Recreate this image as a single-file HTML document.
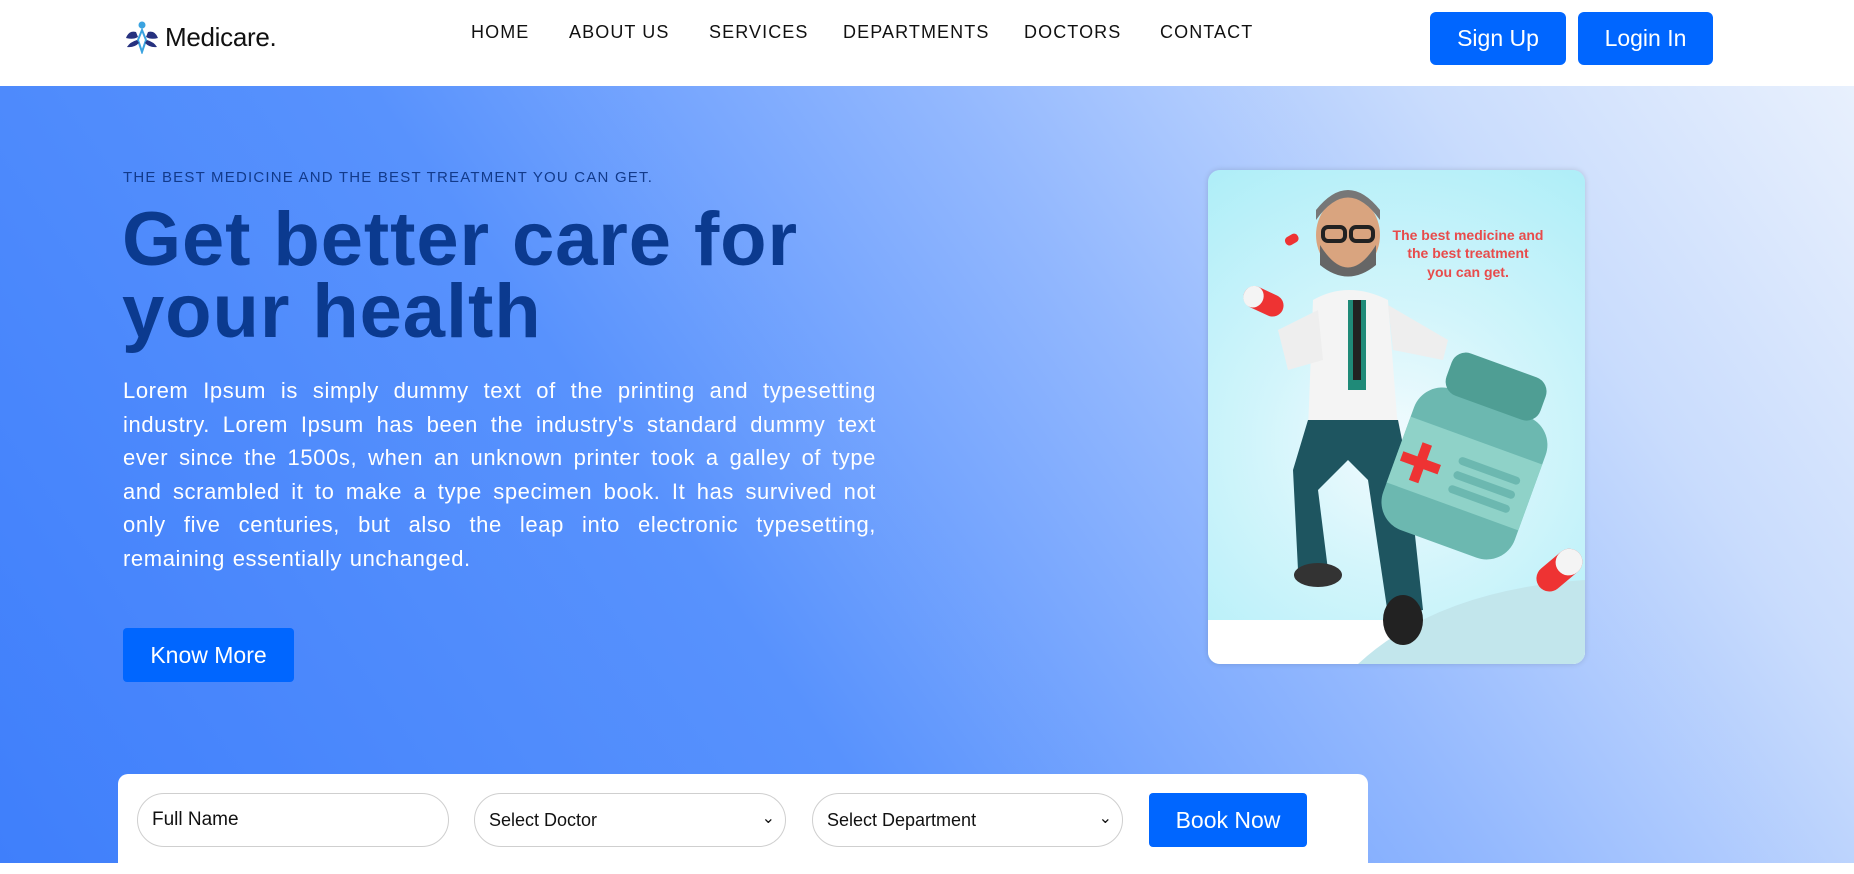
<!DOCTYPE html>
<html><head><meta charset="utf-8"><style>
*{margin:0;padding:0;box-sizing:border-box}
body{width:1854px;height:863px;overflow:hidden;font-family:"Liberation Sans",sans-serif;background:#fff;position:relative}
.nav{position:absolute;left:0;top:0;width:1854px;height:86px;background:#fff}
.logo{position:absolute;left:125px;top:20px;display:flex;align-items:center}
.logo span{font-size:26px;color:#111;margin-left:6px;letter-spacing:-0.3px}
.links a{position:absolute;top:22px;font-size:18px;letter-spacing:1.1px;color:#111;text-decoration:none}
.btn{position:absolute;background:#0066ff;color:#fff;border-radius:6px;display:flex;align-items:center;justify-content:center}
.hero{position:absolute;left:0;top:86px;width:1854px;height:777px;background:linear-gradient(55deg,#3f7ffb 0%,#5892fd 38%,#93b8fe 62%,#c9dcfd 82%,#e8f0fd 100%)}
.tag{position:absolute;left:123px;top:169px;font-size:15px;letter-spacing:1.2px;color:#123a8a}
h1{position:absolute;left:122px;top:204px;font-size:76px;line-height:72px;color:#0b3a8f;font-weight:bold;letter-spacing:0.9px}
p.body{position:absolute;left:123px;top:374px;width:753px;font-size:22px;line-height:33.6px;color:#fff;text-align:justify;letter-spacing:0.6px;word-spacing:1px}
.card{position:absolute;left:1208px;top:170px;width:377px;height:494px;border-radius:12px;overflow:hidden;background:radial-gradient(circle at 50% 55%,#f2fbfe 0%,#d3f5fb 40%,#aeeef8 100%);box-shadow:0 0 6px rgba(0,0,0,.15)}
.bar{position:absolute;left:118px;top:774px;width:1250px;height:100px;background:#fff;border-radius:10px}
.inp{position:absolute;top:19px;height:54px;border:1px solid #cfcfcf;border-radius:27px;font-size:19px;color:#111;display:flex;align-items:center;padding-left:14px}
.inp i{position:absolute;right:10px;top:14px;font-style:normal;font-size:16px}
</style></head><body>
<div class="nav">
 <div class="logo">
  <svg width="34" height="34" viewBox="0 0 34 34"><circle cx="17" cy="5" r="3.5" fill="#3aa3e0"/><path d="M17 10 L13 20 L17 32 L21 20Z" fill="none" stroke="#3aa3e0" stroke-width="2"/><path d="M11 12 Q4 10 1 18 Q8 20 13 17Z M23 12 Q30 10 33 18 Q26 20 21 17Z M12 20 Q5 22 2 27 Q9 28 14 23Z M22 20 Q29 22 32 27 Q25 28 20 23Z" fill="#26317f"/></svg>
  <span>Medicare.</span>
 </div>
 <div class="links">
  <a style="left:471px">HOME</a><a style="left:569px">ABOUT US</a><a style="left:709px">SERVICES</a><a style="left:843px">DEPARTMENTS</a><a style="left:1024px">DOCTORS</a><a style="left:1160px">CONTACT</a>
 </div>
 <div class="btn" style="left:1430px;top:12px;width:136px;height:53px;font-size:23px">Sign Up</div>
 <div class="btn" style="left:1578px;top:12px;width:135px;height:53px;font-size:23px">Login In</div>
</div>
<div class="hero"></div>
<div class="tag">THE BEST MEDICINE AND THE BEST TREATMENT YOU CAN GET.</div>
<h1>Get better care for<br>your health</h1>
<p class="body">Lorem Ipsum is simply dummy text of the printing and typesetting industry. Lorem Ipsum has been the industry's standard dummy text ever since the 1500s, when an unknown printer took a galley of type and scrambled it to make a type specimen book. It has survived not only five centuries, but also the leap into electronic typesetting, remaining essentially unchanged.</p>
<div class="btn" style="left:123px;top:628px;width:171px;height:54px;font-size:23px;border-radius:4px">Know More</div>
<div class="card">
 <svg width="377" height="494" viewBox="0 0 377 494">
  <rect x="0" y="450" width="377" height="44" fill="#fff"/>
  <path d="M150 494 Q230 420 377 410 L377 494Z" fill="#c2e6ec"/>
  <text x="260" y="70" font-family="Liberation Sans" font-weight="bold" font-size="14" fill="#e84b4b" text-anchor="middle">The best medicine and</text>
  <text x="260" y="88" font-family="Liberation Sans" font-weight="bold" font-size="14" fill="#e84b4b" text-anchor="middle">the best treatment</text>
  <text x="260" y="107" font-family="Liberation Sans" font-weight="bold" font-size="14" fill="#e84b4b" text-anchor="middle">you can get.</text>
  <path d="M105 130 Q140 110 180 130 L190 260 L100 260Z" fill="#f4f4f4"/>
  <path d="M70 160 L110 140 L115 190 L80 200Z M180 135 L240 170 L235 190 L185 180Z" fill="#eee"/>
  <rect x="140" y="130" width="18" height="90" fill="#1f8a78"/>
  <rect x="145" y="130" width="8" height="80" fill="#222"/>
  <path d="M100 250 L190 250 L200 300 L215 440 L180 445 L160 310 L140 290 L110 320 L120 400 L90 400 L85 300Z" fill="#1e5560"/>
  <ellipse cx="110" cy="405" rx="24" ry="12" fill="#333"/>
  <ellipse cx="195" cy="450" rx="20" ry="25" fill="#222"/>
  <ellipse cx="140" cy="65" rx="32" ry="38" fill="#d9a47f"/>
  <path d="M108 50 Q140 5 172 50 L172 40 Q140 0 108 40Z" fill="#777"/>
  <path d="M112 75 Q140 120 168 75 L168 95 Q140 118 112 95Z" fill="#666"/>
  <rect x="115" y="57" width="22" height="14" rx="5" fill="none" stroke="#222" stroke-width="4"/>
  <rect x="143" y="57" width="22" height="14" rx="5" fill="none" stroke="#222" stroke-width="4"/>
  <g transform="rotate(20 265 280)">
   <rect x="195" y="230" width="140" height="150" rx="30" fill="#6cb8b0"/>
   <rect x="195" y="270" width="140" height="70" fill="#8fd2c8"/>
   <rect x="215" y="190" width="100" height="45" rx="15" fill="#4f9e94"/>
   <rect x="215" y="290" width="10" height="40" fill="#e33"/><rect x="200" y="305" width="40" height="10" fill="#e33"/>
   <rect x="255" y="290" width="65" height="8" rx="4" fill="#6cb8b0"/><rect x="255" y="305" width="65" height="8" rx="4" fill="#6cb8b0"/><rect x="255" y="320" width="65" height="8" rx="4" fill="#6cb8b0"/>
  </g>
  <g transform="rotate(25 55 130)"><rect x="35" y="120" width="42" height="22" rx="11" fill="#e33"/><rect x="35" y="120" width="20" height="22" rx="11" fill="#f4f4f4"/></g>
  <g transform="rotate(-40 350 400)"><rect x="325" y="388" width="52" height="26" rx="13" fill="#e33"/><rect x="350" y="388" width="27" height="26" rx="13" fill="#f4f4f4"/></g>
  <rect x="77" y="65" width="14" height="9" rx="4" fill="#e33" transform="rotate(-30 84 70)"/>
 </svg>
</div>
<div class="bar">
 <div class="inp" style="left:19px;width:312px">Full Name</div>
 <div class="inp" style="left:356px;width:312px;font-size:18px">Select Doctor<i>&#8964;</i></div>
 <div class="inp" style="left:694px;width:311px;font-size:18px">Select Department<i>&#8964;</i></div>
 <div class="btn" style="left:1031px;top:19px;width:158px;height:54px;font-size:23px;border-radius:4px">Book Now</div>
</div>
</body></html>
